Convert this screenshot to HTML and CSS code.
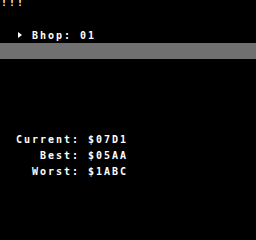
FILE: index.html
```html
<!DOCTYPE html>
<html>
<head>
<meta charset="utf-8">
<link rel="stylesheet" href="styles.css">
</head>
<body>
<div class="screen">
  <div class="row top">!!!</div>
  <div class="row menu"><svg class="cursor" width="8" height="8" viewBox="0 0 8 8"><polygon points="2,0 2,6 6,3" fill="#fff"/></svg><span class="sp"></span>Bhop: 01</div>
  <div class="bar"></div>
  <div class="stats">
    <span class="label">Current:</span><span class="val">$07D1</span>
    <span class="label">Best:</span><span class="val">$05AA</span>
    <span class="label">Worst:</span><span class="val">$1ABC</span>
  </div>
</div>
</body>
</html>
```
FILE: styles.css
```css
html, body {
  margin: 0;
  padding: 0;
  background: #000;
}
.screen {
  width: 256px;
  height: 240px;
  background: #000;
  color: #fff;
  font-family: "DejaVu Sans Mono", monospace;
  font-weight: bold;
  font-size: 10px;
  letter-spacing: 1.98px;
  line-height: 8px;
  overflow: hidden;
}
.row {
  height: 8px;
  white-space: pre;
}
.top {
  margin-top: -1px;
  padding-left: 1px;
}
.menu {
  margin-top: 25px;
  padding-left: 16px;
  display: flex;
  align-items: flex-start;
}
.cursor {
  display: block;
  width: 8px;
  height: 8px;
}
.sp {
  display: block;
  width: 8px;
}
.bar {
  margin-top: 3px;
  height: 16px;
  background: #707070;
}
.stats {
  margin-top: 77px;
  display: grid;
  grid-template-columns: 64px 40px;
  column-gap: 8px;
  row-gap: 8px;
  padding-left: 16px;
}
.label {
  text-align: right;
  height: 8px;
}
.val {
  height: 8px;
}
```
